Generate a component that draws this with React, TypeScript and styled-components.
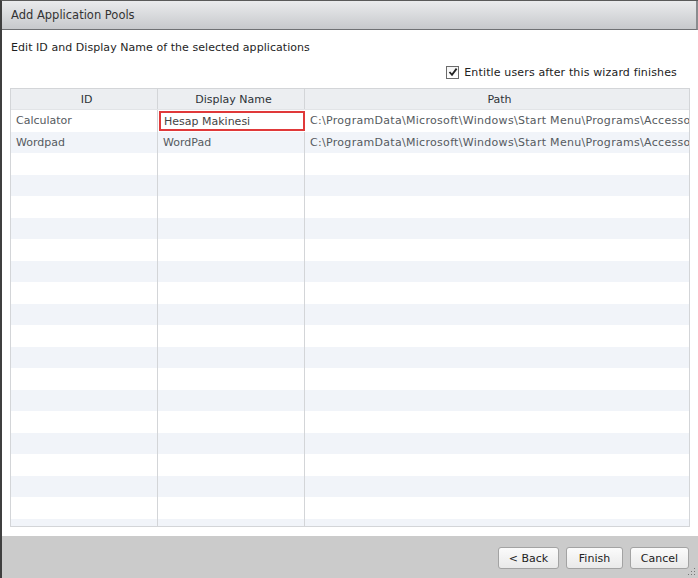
import styled, { createGlobalStyle } from "styled-components"

const GlobalStyle = createGlobalStyle`
  html, body {
    margin: 0;
    padding: 0;
    background: #ffffff;
  }
  * {
    box-sizing: border-box;
  }
`

const Window = styled.div`
  position: relative;
  width: 698px;
  height: 578px;
  display: flex;
  flex-direction: column;
  border-left: 2px solid #3f3f3f;
  border-top: 1px solid #5a5a5a;
  font-family: "DejaVu Sans", Verdana, sans-serif;
  font-size: 11px;
  color: #222;
  background: #fff;
  overflow: hidden;
`

const TitleBar = styled.div`
  height: 29px;
  flex: none;
  padding-left: 9px;
  line-height: 28px;
  font-size: 11.5px;
  color: #333;
  background: linear-gradient(#eaebed, #c7c9cc);
  border-bottom: 1px solid #6f7174;
  border-right: 2px solid #8a8c8f;
`

const Body = styled.div`
  flex: 1;
  min-height: 0;
  display: flex;
  flex-direction: column;
  padding: 9px 8px 9px 8px;
`

const Heading = styled.div`
  height: 17px;
  line-height: 17px;
  padding-left: 1px;
  letter-spacing: 0.05px;
  color: #1e1e1e;
`

const OptionRow = styled.label`
  display: flex;
  justify-content: flex-end;
  align-items: center;
  gap: 5px;
  margin-top: 8px;
  height: 16px;
  padding-right: 13px;
  letter-spacing: 0.15px;
  color: #222;
`

const CheckBox = styled.span`
  width: 13px;
  height: 13px;
  border: 1px solid #6b6b6b;
  background: linear-gradient(#f4f4f4, #ffffff);
  display: flex;
  align-items: center;
  justify-content: center;
`

const Table = styled.div`
  margin-top: 8px;
  width: 680px;
  flex: 1;
  min-height: 0;
  display: flex;
  flex-direction: column;
  border: 1px solid #d3d5d8;
  overflow: hidden;
`

const Row = styled.div<{ $shade?: boolean; $head?: boolean }>`
  flex: none;
  display: grid;
  grid-template-columns: 147px 147px 1fr;
  height: ${(p) => (p.$head ? "21px" : "21.5px")};
  background: ${(p) => (p.$head ? "#eceef1" : p.$shade ? "#f1f4f9" : "#ffffff")};
  border-bottom: ${(p) => (p.$head ? "1px solid #e2e4e7" : "none")};
`

const Cell = styled.div<{ $head?: boolean; $last?: boolean; $edit?: boolean }>`
  overflow: hidden;
  white-space: nowrap;
  padding-left: ${(p) => (p.$edit ? "3px" : "5px")};
  line-height: ${(p) => (p.$edit ? "17px" : "21px")};
  text-align: ${(p) => (p.$head ? "center" : "left")};
  color: ${(p) => (p.$head ? "#2e3338" : "#555a60")};
  border-right: ${(p) => (p.$last ? "none" : "1px solid #d3d5d8")};
  ${(p) =>
    p.$edit &&
    `
    margin: 1px 0 1px 1px;
    border: 2px solid #e0393a;
    color: #444;
    background: #fff;
  `}
`

const PathText = styled.span`
  letter-spacing: 0.3px;
`

const Footer = styled.div`
  height: 42px;
  flex: none;
  display: flex;
  justify-content: flex-end;
  align-items: flex-start;
  gap: 7px;
  padding: 11px 9px 0 0;
  background: #cbcbcb;
`

const Button = styled.button<{ $w: number }>`
  width: ${(p) => p.$w}px;
  height: 22px;
  padding: 0;
  font-family: "DejaVu Sans", Verdana, sans-serif;
  font-size: 11px;
  color: #222;
  background: linear-gradient(#fbfbfb, #e9e9e9);
  border: 1px solid #a3a3a3;
  border-radius: 3px;
`

const Grip = styled.svg`
  position: absolute;
  right: 2px;
  bottom: 2px;
`

const data = [
  {
    id: "Calculator",
    name: "Hesap Makinesi",
    path: "C:\\ProgramData\\Microsoft\\Windows\\Start Menu\\Programs\\Accessories\\Calculator.lnk",
  },
  {
    id: "Wordpad",
    name: "WordPad",
    path: "C:\\ProgramData\\Microsoft\\Windows\\Start Menu\\Programs\\Accessories\\Wordpad.lnk",
  },
]

const emptyRows = Array.from({ length: 18 })

const App = () => {
  return (
    <>
      <GlobalStyle />
      <Window>
        <TitleBar>Add Application Pools</TitleBar>
        <Body>
          <Heading>Edit ID and Display Name of the selected applications</Heading>
          <OptionRow>
            <CheckBox>
              <svg width="10" height="10" viewBox="0 0 10 10">
                <path d="M1.5 5 L4 7.8 L8.6 1.6" fill="none" stroke="#222" strokeWidth="1.8" />
              </svg>
            </CheckBox>
            Entitle users after this wizard finishes
          </OptionRow>
          <Table>
            <Row $head>
              <Cell $head>ID</Cell>
              <Cell $head>Display Name</Cell>
              <Cell $head $last>Path</Cell>
            </Row>
            {data.map((d, i) => (
              <Row key={d.id} $shade={i % 2 === 1}>
                <Cell>{d.id}</Cell>
                <Cell $edit={i === 0}>{d.name}</Cell>
                <Cell $last>
                  <PathText>{d.path}</PathText>
                </Cell>
              </Row>
            ))}
            {emptyRows.map((_, i) => (
              <Row key={i} $shade={i % 2 === 1}>
                <Cell />
                <Cell />
                <Cell $last />
              </Row>
            ))}
          </Table>
        </Body>
        <Footer>
          <Button $w={61}>&lt; Back</Button>
          <Button $w={57}>Finish</Button>
          <Button $w={59}>Cancel</Button>
        </Footer>
        <Grip width="8" height="8" viewBox="0 0 8 8">
          <rect x="6" y="0" width="1" height="1" fill="#777" />
          <rect x="3" y="3" width="1" height="1" fill="#777" />
          <rect x="6" y="3" width="1" height="1" fill="#777" />
          <rect x="0" y="6" width="1" height="1" fill="#777" />
          <rect x="3" y="6" width="1" height="1" fill="#777" />
          <rect x="6" y="6" width="1" height="1" fill="#777" />
        </Grip>
      </Window>
    </>
  )
}

export default App
